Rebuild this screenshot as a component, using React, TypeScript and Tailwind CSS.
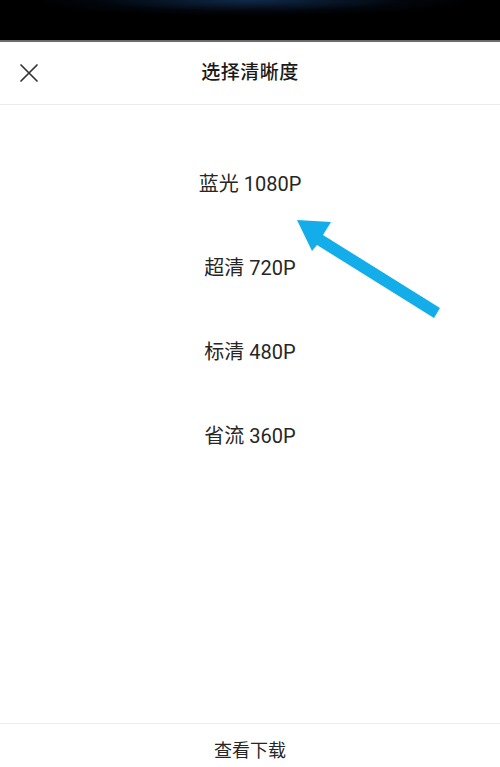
import React from 'react';

const OPTIONS = ['蓝光 1080P', '超清 720P', '标清 480P', '省流 360P'];

const FONT = {
  fontFamily: 'Roboto, "Noto Sans CJK SC", sans-serif',
};

export default function App() {
  return (
    <div
      className="relative flex h-[767px] w-[500px] flex-col overflow-hidden bg-white text-[#222]"
      style={FONT}
    >
      {/* 顶部视频区域 */}
      <div className="h-[40px] bg-[radial-gradient(ellipse_220px_16px_at_50%_0%,#0f2a4a_0%,#02060c_70%,#000_100%)]" />
      <div className="h-[2px] bg-[#6b6b6b]" />

      {/* 标题栏 */}
      <div className="relative flex h-[63px] items-center justify-center border-b border-[#ececec]">
        <button className="absolute left-[19px] top-[21px] text-[#333]">
          <svg width="20" height="20" viewBox="0 0 20 20" fill="none">
            <path d="M2 2 L18 18 M18 2 L2 18" stroke="currentColor" strokeWidth="1.7" strokeLinecap="round" />
          </svg>
        </button>
        <div className="text-[19px] font-medium tracking-[0.5px] text-[#1a1a1a]">选择清晰度</div>
      </div>

      {/* 清晰度列表 */}
      <div className="flex flex-1 flex-col pt-[69px]">
        {OPTIONS.map((item) => (
          <div key={item} className="flex h-[84px] items-start justify-center">
            <span className="text-[20px] leading-[20px] text-[#262626]">{item}</span>
          </div>
        ))}
      </div>

      {/* 底部 */}
      <div className="flex h-[44px] items-center justify-center border-t border-[#ededed] pt-[9px]">
        <span className="text-[18px] text-[#262626]">查看下载</span>
      </div>

      {/* 指示箭头 */}
      <svg className="pointer-events-none absolute left-0 top-0" width="500" height="767" viewBox="0 0 500 767">
        <polygon points="297,220 331,222 323,235 440,308 434,318 317,245 312,251" fill="#13aee9" />
      </svg>
    </div>
  );
}
